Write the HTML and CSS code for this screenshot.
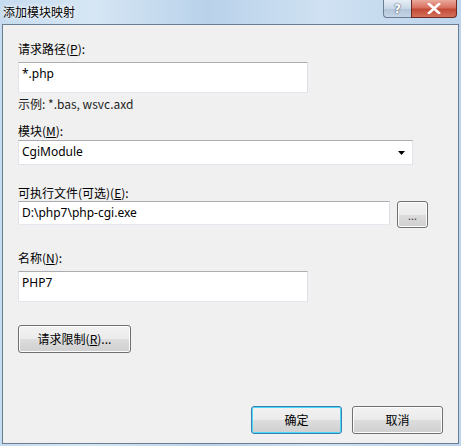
FILE: index.html
```html
<!DOCTYPE html>
<html>
<head>
<meta charset="utf-8">
<link rel="stylesheet" href="styles.css">
</head>
<body>
<div class="window">
  <div class="titlebar">
    <div class="title">添加模块映射</div>
    <div class="caption-btns">
      <div class="cbtn help">?</div>
      <div class="cbtn close">
        <svg width="14" height="11" viewBox="0 0 14 11"><path d="M2 1 L12 10 M12 1 L2 10" stroke="#fff" stroke-width="2.6" stroke-linecap="square"/></svg>
      </div>
    </div>
  </div>
  <div class="client">
    <div class="label l1">请求路径(<u>P</u>):</div>
    <div class="textbox tb-path">*.php</div>
    <div class="hint">示例: *.bas, wsvc.axd</div>
    <div class="label l2">模块(<u>M</u>):</div>
    <div class="select">
      <span>CgiModule</span>
      <svg width="7" height="4" viewBox="0 0 7 4"><path d="M0 0 H7 L3.5 4 Z" fill="#000"/></svg>
    </div>
    <div class="label l3">可执行文件(可选)(<u>E</u>):</div>
    <div class="row">
      <div class="textbox tb-exe">D:\php7\php-cgi.exe</div>
      <div class="btn browse">...</div>
    </div>
    <div class="label l4">名称(<u>N</u>):</div>
    <div class="textbox tb-name">PHP7</div>
    <div class="btn restrict">请求限制(<u>R</u>)...</div>
    <div class="footer">
      <div class="btn ok">确定</div>
      <div class="btn cancel">取消</div>
    </div>
  </div>
</div>
</body>
</html>
```
FILE: styles.css
```css
* { box-sizing: border-box; }
html, body { margin: 0; padding: 0; }
body {
  width: 461px;
  height: 446px;
  overflow: hidden;
  font-family: "Segoe UI", "Noto Sans", "Noto Sans CJK SC", sans-serif;
  font-size: 12px;
  color: #000;
}
.window {
  width: 461px;
  height: 446px;
  background: linear-gradient(90deg, #c5dbef 0%, #d6e6f4 20%, #b9d2ea 45%, #cfe1f2 70%, #bcd4ec 100%);
  padding: 0 2px 2px 2px;
  display: flex;
  flex-direction: column;
}
.titlebar {
  height: 24px;
  display: flex;
  justify-content: space-between;
  align-items: flex-start;
}
.title {
  font-family: "Noto Sans CJK SC", sans-serif;
  font-size: 12px;
  line-height: 16px;
  padding: 4px 0 0 1px;
  color: #000;
  text-shadow: 0 0 6px #fff, 0 0 3px #fff;
}
.caption-btns {
  display: flex;
  margin-right: 2px;
}
.cbtn {
  height: 18px;
  border: 1px solid #6d7e94;
  border-top: none;
  display: flex;
  align-items: center;
  justify-content: center;
}
.help {
  width: 28px;
  border-radius: 0 0 0 4px;
  border-right: none;
  background: linear-gradient(#e6eef6 0%, #c9d7e6 50%, #b1c4d9 51%, #c6d5e4 100%);
  color: #fff;
  font-family: "DejaVu Sans", sans-serif;
  font-weight: bold;
  font-size: 12px;
  text-shadow: 0 0 2px #4a5c73, 0 0 1px #4a5c73;
}
.close {
  width: 46px;
  border-radius: 0 0 4px 0;
  border-color: #6e2a22;
  background: linear-gradient(#e9a99c 0%, #d8705f 45%, #c24a36 55%, #d2715c 100%);
}
.client {
  flex: 1;
  background: #f0f0f0;
  border: 1px solid #6a7d92;
  padding: 0 0 0 15px;
  display: flex;
  flex-direction: column;
}
.label, .hint {
  font-family: "Noto Sans CJK SC", sans-serif;
  line-height: 16px;
  height: 16px;
}
.label u { text-underline-offset: 1px; }
.l1 { margin-top: 16px; }
.textbox {
  background: #fff;
  border: 1px solid #dfe6ee;
  border-top-color: #abadb3;
  border-left-color: #e2e3ea;
  border-right-color: #dbdfe6;
  border-bottom-color: #e3e9ef;
  padding: 3px 2px 0 3px;
  line-height: 16px;
  font-family: "Segoe UI", "Noto Sans", sans-serif;
}
.tb-path { margin-top: 5px; width: 290px; height: 31px; }
.hint { margin-top: 3px; color: #1e1e1e; }
.l2 { margin-top: 11px; }
.select {
  margin-top: 1px;
  width: 395px;
  height: 25px;
  background: #fff;
  border: 1px solid #e2e3ea;
  border-top-color: #abadb3;
  display: flex;
  align-items: center;
  justify-content: space-between;
  padding: 0 7px 1px 3px;
  line-height: 16px;
}
.select svg { margin-top: 2px; }
.l3 { margin-top: 20px; }
.row {
  margin-top: 0;
  display: flex;
  align-items: flex-start;
  gap: 7px;
}
.tb-exe { width: 372px; height: 24px; margin-top: 0; }
.btn {
  border: 1px solid #707070;
  border-radius: 3px;
  background: linear-gradient(#f2f2f2 0%, #ebebeb 50%, #dddddd 51%, #cfcfcf 100%);
  box-shadow: inset 0 0 0 1px #fcfcfc;
  display: flex;
  align-items: center;
  justify-content: center;
  font-family: "Noto Sans CJK SC", sans-serif;
  line-height: 16px;
}
.browse {
  width: 31px;
  height: 27px;
  font-family: "Segoe UI", "Noto Sans", sans-serif;
  font-size: 11px;
  letter-spacing: 0;
  padding-top: 2px;
  color: #333;
}
.l4 { margin-top: 22px; }
.tb-name { margin-top: 5px; width: 290px; height: 31px; }
.restrict {
  margin-top: 23px;
  width: 113px;
  height: 28px;
  padding-bottom: 1px;
}
.footer {
  margin-top: 53px;
  display: flex;
  gap: 10px;
  padding-left: 233px;
}
.ok, .cancel { width: 91px; height: 28px; }
.ok {
  border-color: #3c7fb1;
  box-shadow: inset 0 0 0 1px #48d8f8;
}
```
